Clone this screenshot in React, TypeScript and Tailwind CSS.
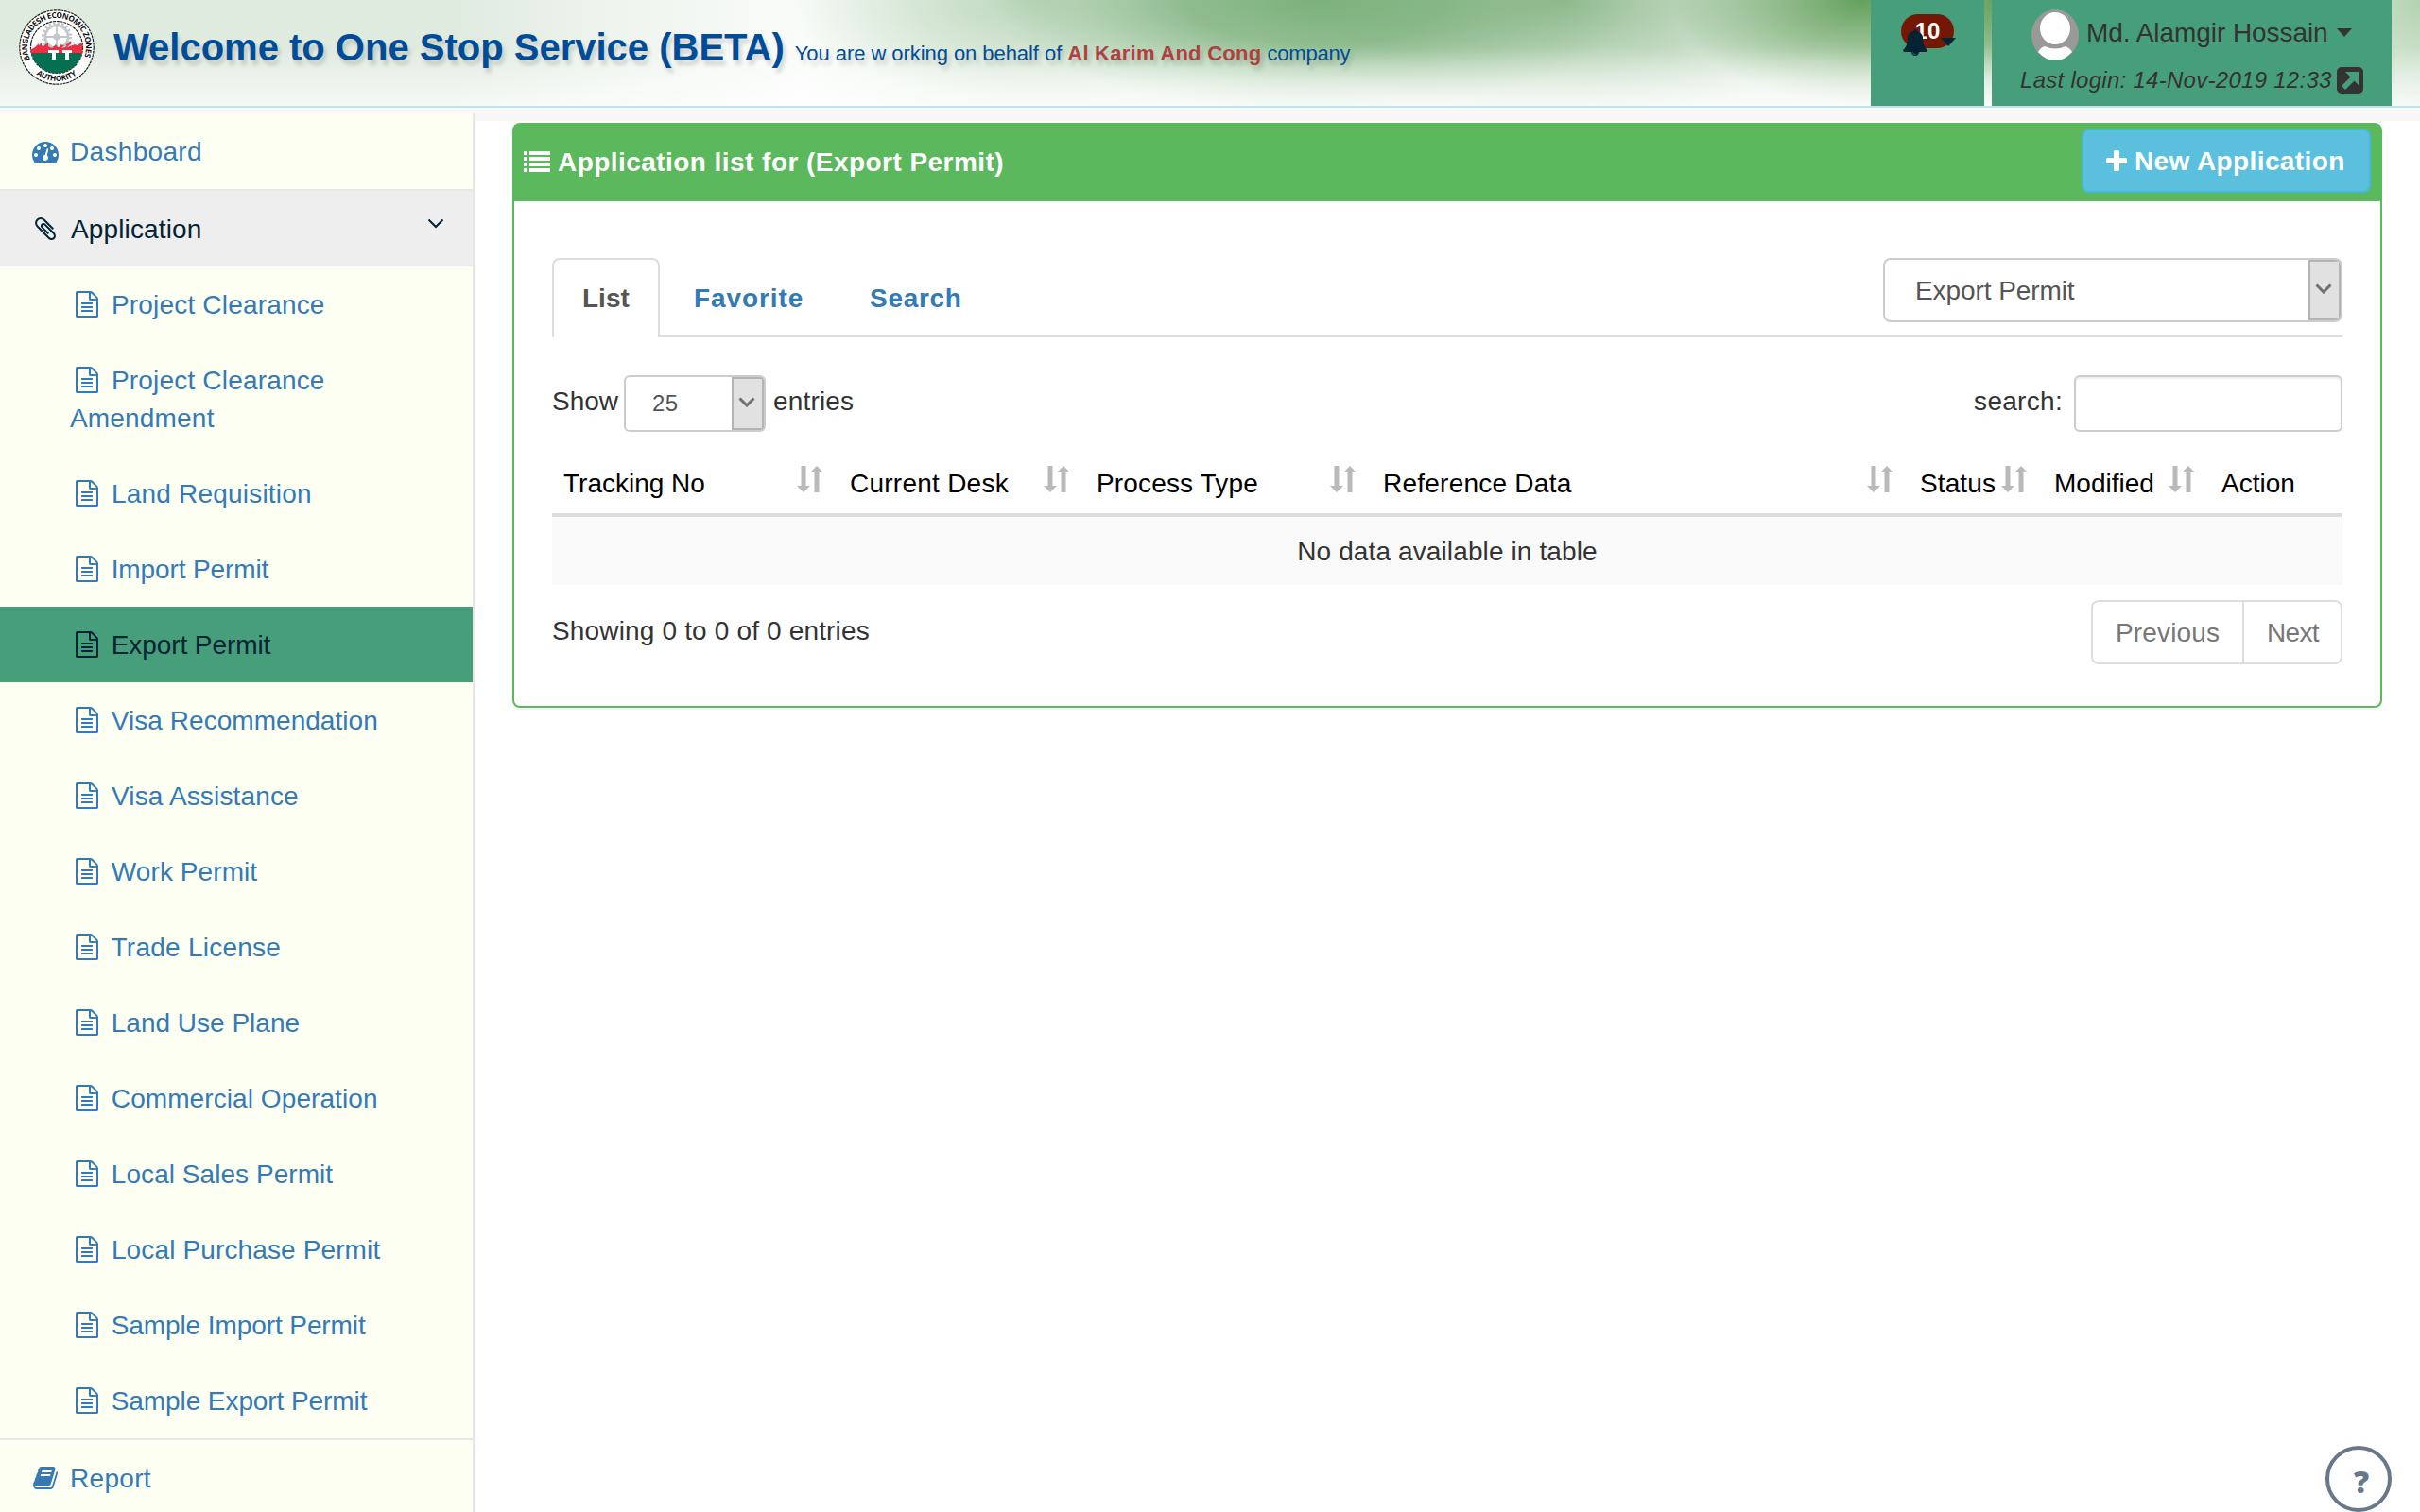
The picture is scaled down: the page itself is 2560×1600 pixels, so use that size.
import React from "react";

const P = {
  file: "M1468 380q28 28 48 76t20 88v1152q0 40-28 68t-68 28h-1344q-40 0-68-28t-28-68v-1600q0-40 28-68t68-28h896q40 0 88 20t76 48zM1024 136v376h376q-10-29-22-41l-313-313q-12-12-41-22zM1408 1664v-1024h-416q-40 0-68-28t-28-68v-416h-768v1536h1280zM384 800q0-14 9-23t23-9h704q14 0 23 9t9 23v64q0 14-9 23t-23 9h-704q-14 0-23-9t-9-23v-64zM1120 1024q14 0 23 9t9 23v64q0 14-9 23t-23 9h-704q-14 0-23-9t-9-23v-64q0-14 9-23t23-9h704zM1120 1280q14 0 23 9t9 23v64q0 14-9 23t-23 9h-704q-14 0-23-9t-9-23v-64q0-14 9-23t23-9h704z",
  book: "M1639 478q40 57 18 129l-275 906q-19 64-76.5 107.5t-122.5 43.5h-923q-77 0-148.5-53.5t-99.5-131.5q-24-67-2-127 0-4 3-27t4-37q1-8-3-21.5t-3-19.5q2-11 8-21t16.5-23.5 16.5-23.5q23-38 45-91.5t30-91.5q3-10 .5-30t-.5-28q3-11 17-28t17-23q21-36 42-92t25-90q1-9-2.5-32t.5-28q4-13 22-30.5t22-22.5q19-26 42.5-84.5t27.5-96.5q1-8-3-25.5t-2-26.5q2-8 9-18t18-23 17-21q8-12 16.5-30.5t15-35 16-36 19.5-32 26.5-23.5 36-11.5 47.5 5.5l-1 3q38-9 51-9h761q74 0 114 56t18 130l-274 906q-36 119-71.5 153.5t-128.5 34.5h-869q-27 0-38 15-11 16-1 43 24 70 144 70h923q29 0 56-15.5t35-41.5l300-987q7-22 5-57 38 15 59 43zm-1064 2q-4 13 2 22.5t20 9.5h608q13 0 25.5-9.5t16.5-22.5l21-64q4-13-2-22.5t-20-9.5h-608q-13 0-25.5 9.5t-16.5 22.5zm-83 256q-4 13 2 22.5t20 9.5h608q13 0 25.5-9.5t16.5-22.5l21-64q4-13-2-22.5t-20-9.5h-608q-13 0-25.5 9.5t-16.5 22.5z",
  bell: "M912 1696q0-16-16-16-59 0-101.5-42.5t-42.5-101.5q0-16-16-16t-16 16q0 73 51.5 124.5t124.5 51.5q16 0 16-16zm816-288q0 52-38 90t-90 38h-448q0 106-75 181t-181 75-181-75-75-181h-448q-52 0-90-38t-38-90q50-42 91-88t85-119.5 74.5-158.5 50-206 19.5-260q0-152 117-282.5t307-158.5q-8-19-8-39 0-40 28-68t68-28 68 28 28 68q0 20-8 39 190 28 307 158.5t117 282.5q0 139 19.5 260t50 206 74.5 158.5 85 119.5 91 88z",
  dash: "M384 1152q0-53-37.5-90.5t-90.5-37.5-90.5 37.5-37.5 90.5 37.5 90.5 90.5 37.5 90.5-37.5 37.5-90.5zm192-448q0-53-37.5-90.5t-90.5-37.5-90.5 37.5-37.5 90.5 37.5 90.5 90.5 37.5 90.5-37.5 37.5-90.5zm428 481l101-382q6-26-7.5-48.5t-38.5-29.5-48 6.5-30 39.5l-101 382q-60 5-107 43.5t-63 98.5q-20 77 20 146t117 89 146-20 89-117q16-60-6-117t-72-91zm660-33q0-53-37.5-90.5t-90.5-37.5-90.5 37.5-37.5 90.5 37.5 90.5 90.5 37.5 90.5-37.5 37.5-90.5zm-640-640q0-53-37.5-90.5t-90.5-37.5-90.5 37.5-37.5 90.5 37.5 90.5 90.5 37.5 90.5-37.5 37.5-90.5zm448 192q0-53-37.5-90.5t-90.5-37.5-90.5 37.5-37.5 90.5 37.5 90.5 90.5 37.5 90.5-37.5 37.5-90.5zm320 448q0 261-141 483-19 29-54 29h-1402q-35 0-54-29-141-221-141-483 0-182 71-348t191-286 286-191 348-71 348 71 286 191 191 286 71 348z",
  clip: "M1404 1385q0 117-79 196t-196 79q-135 0-235-100l-777-776q-113-115-113-271 0-159 110-270t269-111q158 0 273 113l605 606q10 10 10 22 0 16-30.5 46.5t-46.5 30.5q-13 0-23-10l-606-607q-79-77-181-77-106 0-179 75t-73 181q0 105 76 181l776 777q63 63 145 63 64 0 106-42t42-106q0-82-63-145l-581-581q-26-24-60-24-29 0-48 19t-19 48q0 32 25 59l410 410q10 10 10 22 0 16-31 47t-47 31q-12 0-22-10l-410-410q-63-61-63-149 0-82 57-139t139-57q88 0 149 63l581 581q100 98 100 235z",
  plus: "M1600 736v192q0 40-28 68t-68 28h-416v416q0 40-28 68t-68 28h-192q-40 0-68-28t-28-68v-416h-416q-40 0-68-28t-28-68v-192q0-40 28-68t68-28h416v-416q0-40 28-68t68-28h192q40 0 68 28t28 68v416h416q40 0 68 28t28 68z",
};

/* 28px-high glyph, centred in a fixed 36px slot */
function Glyph({ d, w = 1792 }: { d: string; w?: number }) {
  return (
    <svg viewBox={`0 0 ${w} 1792`} className="inline-block h-7 w-9 align-[-4px] fill-current">
      <path d={d} />
    </svg>
  );
}

function Logo() {
  return (
    <svg viewBox="0 0 80 80" className="h-20 w-20 shrink-0">
      <defs>
        <path id="ring-top" d="M12.4 54 A31 31 0 1 1 67.6 54" />
        <path id="ring-bottom" d="M10 60 A36.2 36.2 0 0 0 70 60" />
        <clipPath id="disc"><circle cx="40" cy="40" r="27.5" /></clipPath>
      </defs>
      <circle cx="40" cy="40" r="39.2" fill="#fff" stroke="#222" strokeWidth="1.2" strokeDasharray="3 0.7" />
      <circle cx="40" cy="40" r="27.5" fill="#fff" stroke="#222" strokeWidth="1.2" strokeDasharray="3 0.8" />
      <g clipPath="url(#disc)">
        <circle cx="40" cy="29" r="14.6" fill="none" stroke="#c4c6c8" strokeWidth="3" strokeDasharray="2.4 2.2" />
        <circle cx="40" cy="29" r="12" fill="none" stroke="#c4c6c8" strokeWidth="2.6" />
        <path d="M40 15v28M27 29h26" stroke="#c4c6c8" strokeWidth="1.8" />
        <circle cx="40" cy="29" r="3.6" fill="#c4c6c8" />
        <path d="M12 47V43l5-3 3-3v-2l1 3 3-3v3l2 1 2-2 3-2v4l4 2 4-4 2 3h2v-3l5 1-3 3 6-1 8-3 3 1 4-3 2 4V47z" fill="#ee2f43" />
        <path d="M46 43l10-8M50 38l5-4" stroke="#ee2f43" strokeWidth="1.3" />
        <path d="M10 46h60v30H10z" fill="#04704f" />
        <path d="M31 43h11v3h-3v7h-4v-7h-4zM46 43h10v3h-3v7h-4v-7h-3z" fill="#fff" />
      </g>
      <text fill="#111" fontFamily="Open Sans" fontWeight="700" fontSize="8.2">
        <textPath href="#ring-top" textLength="121" startOffset="1">BANGLADESH ECONOMIC ZONES</textPath>
      </text>
      <text fill="#111" fontFamily="Open Sans" fontWeight="700" fontSize="8.2">
        <textPath href="#ring-bottom" textLength="46" startOffset="12">AUTHORITY</textPath>
      </text>
    </svg>
  );
}

function Header() {
  return (
    <header className="flex h-[114px] border-b-2 border-[#bfe2ec] pr-[30px] [background:linear-gradient(to_bottom,transparent_0%,transparent_45%,rgba(255,255,255,.7)_100%),radial-gradient(ellipse_200px_110px_at_1970px_0px,rgba(92,156,84,.95),rgba(92,156,84,.6)_40%,rgba(92,156,84,0)),radial-gradient(ellipse_90px_110px_at_2110px_0px,rgba(92,156,84,.9),rgba(92,156,84,0)),radial-gradient(ellipse_340px_118px_at_1390px_0px,rgba(118,173,118,.95),rgba(118,173,118,.75)_40%,rgba(118,173,118,.25)_75%,rgba(118,173,118,0)),radial-gradient(ellipse_320px_125px_at_1650px_0px,rgba(140,184,138,.9),rgba(140,184,138,.5)_45%,rgba(140,184,138,0)),radial-gradient(ellipse_260px_110px_at_1090px_0px,rgba(176,208,176,.8),rgba(176,208,176,0)),radial-gradient(ellipse_130px_130px_at_2560px_0px,rgba(160,200,158,.75),rgba(160,200,158,0)),linear-gradient(to_right,#e0ebe0_0,#e0ebe0_480px,#eef4ee_650px,#fafcfa_850px,#edf4ed_1050px,#e6f0e6_1400px,#eaf2ea_1700px,#eaf1e8_2560px)]">
      <div className="flex items-start pt-[10px] pl-5">
        <Logo />
      </div>
      <h1 className="pt-[23px] pl-5 leading-[54px] whitespace-nowrap text-[#004c98] [text-shadow:3px_5px_4px_rgba(0,0,0,.15)]">
        <span className="text-[40px] font-bold">Welcome to One Stop Service (BETA)</span>
        <span className="ml-[11px] text-[22px] tracking-[-0.060px]">
          You are w orking on behalf of <b className="tracking-[0.250px] text-[#ae4140]">Al Karim And Cong</b> <span className="tracking-[-0.200px]">company</span>
        </span>
      </h1>
      <div className="relative ml-auto h-28 w-[120px] bg-[#479e7a]">
        <span className="absolute top-[15px] left-8 h-9 w-14 rounded-[20px] bg-[#741805] pt-px text-center text-[24px] leading-[34px] font-bold text-white">10</span>
        <svg viewBox="0 0 1792 1792" className="absolute top-[31px] left-[33px] h-[28px] w-[28px] fill-[#022333]"><path d={P.bell} /></svg>
        <svg viewBox="0 0 16 9" className="absolute top-[40px] left-[74px] h-[9px] w-4 fill-[#022333]"><path d="M0 0h16L8 9z" /></svg>
      </div>
      <div className="ml-2 h-28 w-[423px] bg-[#479e7a] text-[#333]">
        <div className="flex h-[70px] items-start pl-[42px]">
          <svg viewBox="0 0 50 54" className="mt-[10px] h-[54px] w-[50px]">
            <ellipse cx="25" cy="27" rx="25" ry="27" fill="#999" />
            <ellipse cx="25" cy="20" rx="16" ry="17" fill="#fff" />
            <path d="M7 45q3-5 7-6 11 5 22 0 5 2 7 6-8 9-18 9T7 45z" fill="#fff" />
          </svg>
          <span className="mt-[15px] ml-2 text-[28px] leading-10 tracking-[-0.060px] whitespace-nowrap">Md. Alamgir Hossain</span>
          <svg viewBox="0 0 16 9" className="mt-[30px] ml-[9px] h-[9px] w-4 fill-current"><path d="M0 0h16L8 9z" /></svg>
        </div>
        <div className="flex pl-[30px]">
          <i className="w-[335px] text-[24px] leading-[30px] tracking-[0.280px] whitespace-nowrap">Last login: 14-Nov-2019 12:33</i>
          <svg viewBox="0 0 28 28" className="mt-px h-[28px] w-[28px]">
            <rect width="28" height="28" rx="5" fill="#333" />
            <path d="M9 5h14v14l-4.500-4.500-9.500 9.500-4-4 9.500-9.500z" fill="#479e7a" />
          </svg>
        </div>
      </div>
    </header>
  );
}

const items: [string, string][] = [
  ["Project Clearance", "tracking-[0.180px]"],
  ["Project Clearance Amendment", "tracking-[0.180px]"],
  ["Land Requisition", "tracking-[0.200px]"],
  ["Import Permit", "tracking-[-0.120px]"],
  ["Export Permit", "tracking-[-0.080px]"],
  ["Visa Recommendation", "tracking-[0.040px]"],
  ["Visa Assistance", "tracking-[0.150px]"],
  ["Work Permit", "tracking-[0.080px]"],
  ["Trade License", "tracking-[0.250px]"],
  ["Land Use Plane", "tracking-normal"],
  ["Commercial Operation", "tracking-[0.080px]"],
  ["Local Sales Permit", "tracking-[0.050px]"],
  ["Local Purchase Permit", "tracking-[0.130px]"],
  ["Sample Import Permit", "tracking-[-0.090px]"],
  ["Sample Export Permit", "tracking-[-0.080px]"],
];

function Sidebar() {
  return (
    <nav className="z-10 -mt-2 h-[1480px] w-[502px] shrink-0 overflow-hidden border-r-2 border-[#e7e7e7] bg-[#fdfff3] text-[28px] leading-10 text-[#337ab7]">
      <a className="block h-20 pt-[21px] pl-[30px] tracking-[0.300px]"><Glyph d={P.dash} /> Dashboard</a>
      <div className="border-t-2 border-[#e7e7e7]">
        <a className="flex h-20 justify-between bg-[#eee] pt-[21px] pr-[30px] pl-[30px] text-[#022333]">
          <span className="tracking-[0.150px]"><Glyph d={P.clip} w={1408} /> <span className="ml-px">Application</span></span>
          <svg viewBox="0 0 18 11" className="mt-[8px] h-[11px] w-[18px] fill-none stroke-current stroke-2"><path d="M1.5 1.5L9 9l7.500-7.500" /></svg>
        </a>
        {items.map(([t, c]) => (
          <a key={t} className={`block pt-[21px] pr-20 pb-[19px] pl-[74px] ${c} ${t === "Export Permit" ? "bg-[#479e7a] text-[#022333]" : ""}`}>
            <Glyph d={P.file} w={1536} /> {t}
          </a>
        ))}
      </div>
      <a className="block h-20 border-t-2 border-[#e7e7e7] pt-[21px] pl-[30px] tracking-[0.300px]"><Glyph d={P.book} w={1664} /> Report</a>
    </nav>
  );
}

function SelectArrow() {
  return (
    <span className="flex w-[34px] items-center justify-center border-2 border-[#b4b4b4] bg-[#e1e1e1]">
      <svg viewBox="0 0 18 11" className="mr-[2px] mb-[3px] h-[11px] w-[18px] fill-none stroke-[#707070] stroke-3"><path d="M1.500 1.500L9 9l7.500-7.500" /></svg>
    </span>
  );
}

function Sort() {
  return (
    <svg viewBox="0 0 28 28" className="mt-[7px] h-7 w-7 shrink-0 fill-[#b9b9b9]">
      <path d="M4.500 0h5v21H14L7 28 0 21h4.500zM18.500 28h5V7H28L21 0l-7 7h4.500z" />
    </svg>
  );
}

function Col({ t, c, last }: { t: string; c: string; last?: boolean }) {
  return (
    <div className={`flex h-[57px] justify-between pt-0 pr-4 pl-3 ${c}`}>
      <span className="mt-[6px] leading-10 whitespace-nowrap">{t}</span>
      {last ? null : <Sort />}
    </div>
  );
}

function Panel() {
  return (
    <section className="h-[619px] w-[1978px] rounded-lg border-2 border-[#5cb85c] bg-white shadow-[0_2px_2px_rgba(0,0,0,.05)]">
      <div className="flex h-[81px] items-start justify-between bg-[#5cb85c] pt-1 pr-[10px] pl-[10px] font-bold text-white">
        <div className="flex items-start pt-[16px] leading-10">
          <svg viewBox="0 0 28 22" className="mt-2 h-[22px] w-7 fill-white">
            <path d="M0 0h4v4H0zM6 0h22v4H6zM0 6h4v4H0zM6 6h22v4H6zM0 12h4v4H0zM6 12h22v4H6zM0 18h4v4H0zM6 18h22v4H6z" />
          </svg>
          <span className="ml-2 tracking-[0.450px]">Application list for (Export Permit)</span>
        </div>
        <div className="flex h-[68px] w-[306px] items-center rounded-lg border-2 border-[#46b8da] bg-[#5bc0de] pt-px pl-[24px] whitespace-nowrap">
          <svg viewBox="192 128 1408 1408" className="mr-2 mb-[2px] h-[22px] w-[22px] shrink-0 fill-white"><path d={P.plus} /></svg>
          <span className="tracking-[0.400px]">New Application</span>
        </div>
      </div>
      <div className="px-10 pt-[60px]">
        <div className="flex h-[84px] justify-between border-b-2 border-[#ddd]">
          <div className="flex font-bold text-[#337ab7]">
            <div className="h-[84px] w-[114px] rounded-t-lg border-2 border-b-0 border-[#ddd] bg-white pt-[21px] pl-[30px] leading-10 text-[#555]">List</div>
            <div className="w-[186px] pt-[23px] pl-[36px] leading-10 tracking-[0.900px]">Favorite</div>
            <div className="pt-[23px] pl-[36px] leading-10 tracking-[0.700px]">Search</div>
          </div>
          <div className="flex h-[68px] w-[486px] justify-between overflow-hidden rounded-lg border-2 border-[#ccc] bg-white text-[#555]">
            <span className="pt-[13px] pl-8 leading-10 tracking-[-0.080px]">Export Permit</span>
            <SelectArrow />
          </div>
        </div>
        <div className="flex pt-10 leading-10">
          <span className="w-[76px] pt-2">Show</span>
          <div className="flex h-[60px] w-[150px] justify-between overflow-hidden rounded-md border-2 border-[#ccc] text-[24px] text-[#555]">
            <span className="pt-[8px] pl-[28px] leading-10 tracking-[0.500px]">25</span>
            <SelectArrow />
          </div>
          <span className="ml-2 pt-2 tracking-[0.180px]">entries</span>
          <span className="ml-auto pt-2 tracking-[0.300px]">search:</span>
          <div className="ml-3 h-[60px] w-[284px] rounded-md border-2 border-[#ccc] shadow-[inset_0_2px_2px_rgba(0,0,0,.075)]" />
        </div>
        <div className="mt-[29px] flex border-b-4 border-[#ddd] text-black">
          <Col t="Tracking No" c="w-[303px]" />
          <Col t="Current Desk" c="w-[261px] tracking-[0.250px]" />
          <Col t="Process Type" c="w-[303px] tracking-[0.150px]" />
          <Col t="Reference Data" c="w-[568px] tracking-[0.240px]" />
          <Col t="Status" c="w-[142px] tracking-[0.100px]" />
          <Col t="Modified" c="w-[177px]" />
          <Col t="Action" c="w-[140px]" last />
        </div>
        <div className="h-[72px] bg-[#f9f9f9] pt-[17px] text-center leading-10 tracking-[0.120px]">No data available in table</div>
        <div className="flex justify-between pt-4">
          <span className="pt-[13px] leading-10 tracking-[0.160px]">Showing 0 to 0 of 0 entries</span>
          <div className="flex h-[68px] w-[266px] rounded-lg border-2 border-[#ddd] leading-10 text-[#777]">
            <span className="w-[160px] border-r-2 border-[#ddd] pt-[13px] pl-6 tracking-[0.150px]">Previous</span>
            <span className="pt-[13px] pl-6 tracking-[-0.700px]">Next</span>
          </div>
        </div>
      </div>
    </section>
  );
}

export default function App() {
  return (
    <div className="h-[1600px] w-[2560px] overflow-hidden bg-white font-['Liberation_Sans',Arial,sans-serif] text-[28px] text-[#333]">
      <Header />
      <div className="h-[14px] bg-[#f7f7f7]" />
      <div className="flex">
        <Sidebar />
        <main className="relative h-[1472px] grow pt-0.5 pl-10">
          <Panel />
          <div className="absolute right-[30px] bottom-0 flex h-[70px] w-[70px] items-center justify-center rounded-full border-4 border-[#66788a] pt-[6px] pl-[6px] font-['Open_Sans',sans-serif] text-[32px] leading-none font-extrabold text-[#66788a]">?</div>
        </main>
      </div>
    </div>
  );
}
